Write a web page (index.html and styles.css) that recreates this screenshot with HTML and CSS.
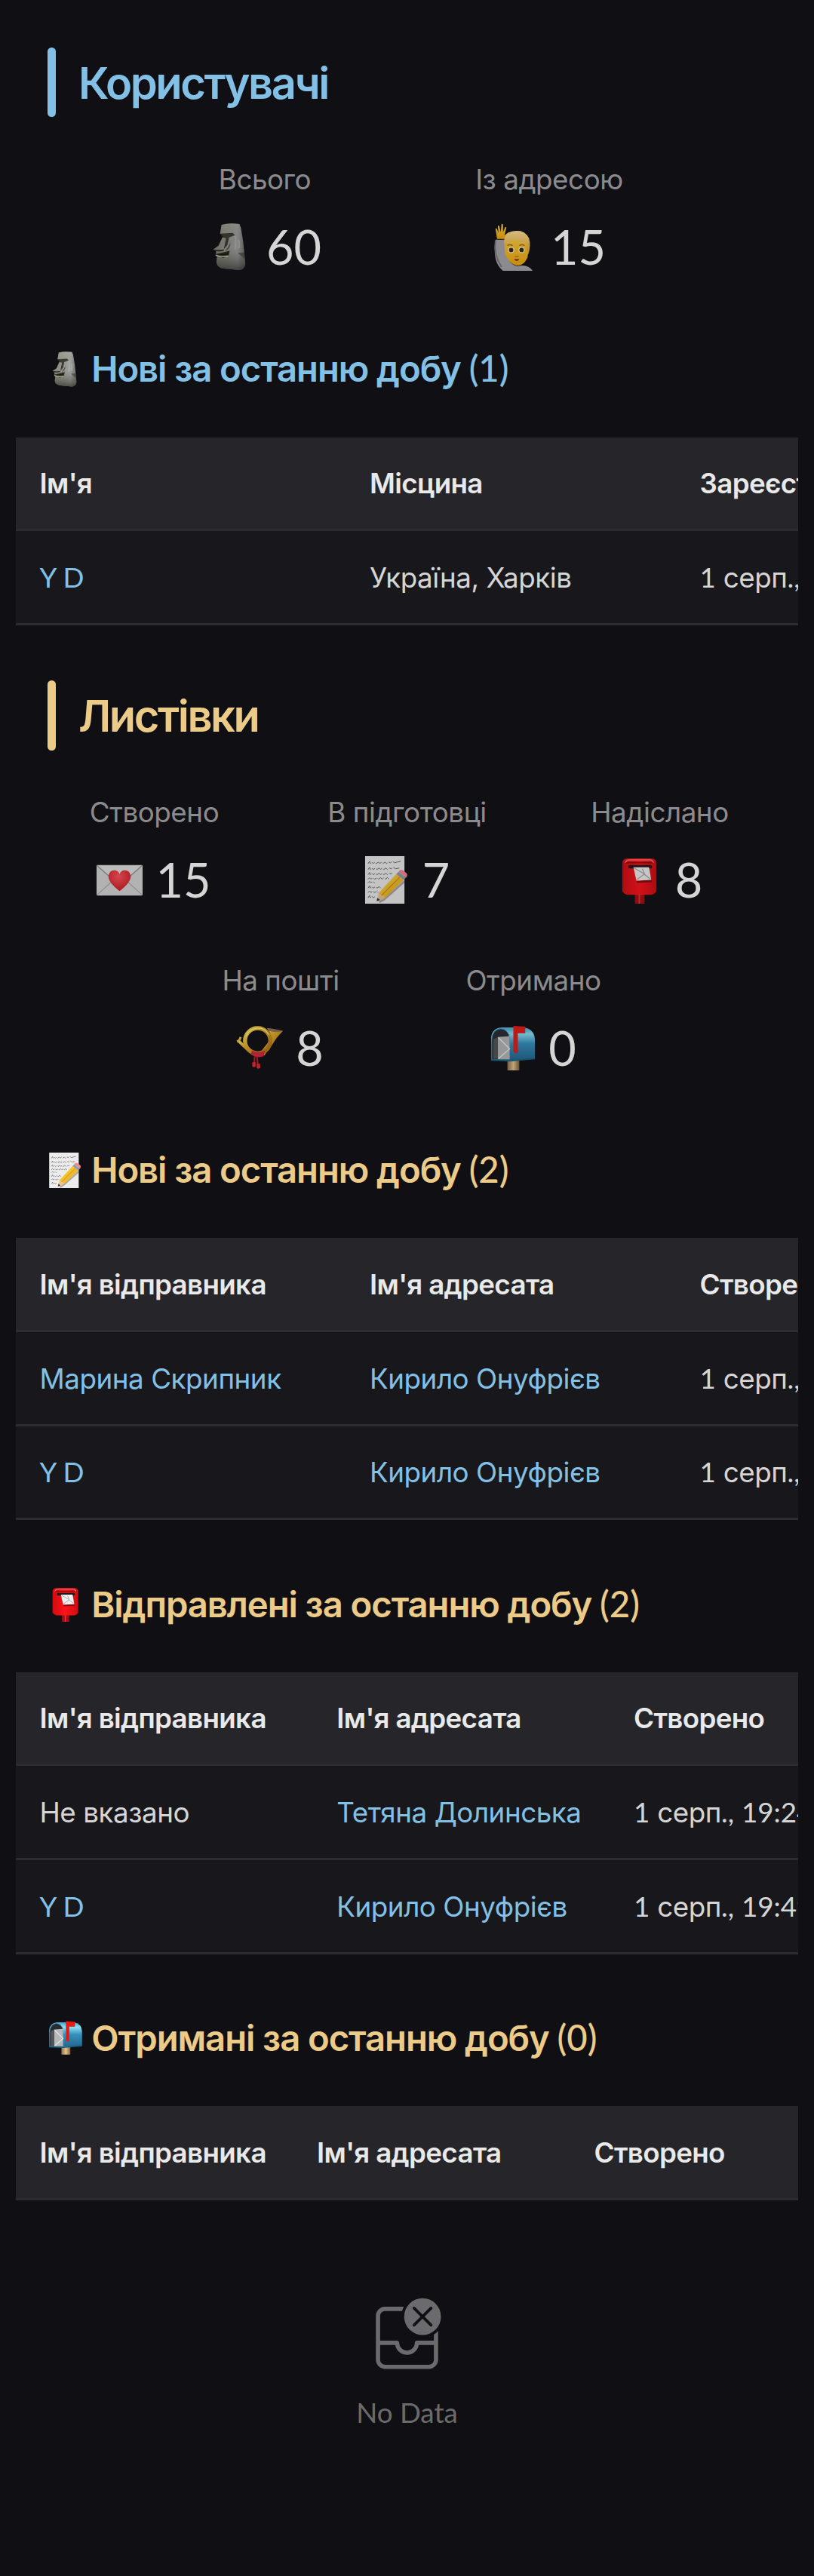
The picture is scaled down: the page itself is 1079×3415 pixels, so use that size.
FILE: index.html
```html
<!DOCTYPE html>
<html lang="uk">
<head>
<meta charset="utf-8">
<title>Статистика</title>
<link rel="stylesheet" href="styles.css">
</head>
<body>
<svg class="sprite" aria-hidden="true">
  <defs>
    <linearGradient id="stone" x1="0" x2="1" y1="0" y2="0"><stop offset="0" stop-color="#85857a"/><stop offset=".45" stop-color="#96968e"/><stop offset=".75" stop-color="#a0a2a4"/><stop offset="1" stop-color="#6e6e66"/></linearGradient>
    <linearGradient id="stone-shade" x1="0" x2="0" y1="0" y2="1"><stop offset="0" stop-color="#b0b098" stop-opacity=".4"/><stop offset=".5" stop-color="#777" stop-opacity="0"/><stop offset="1" stop-color="#2b2b20" stop-opacity=".7"/></linearGradient>
    <linearGradient id="skin" x1="0" x2="0" y1="0" y2="1"><stop offset="0" stop-color="#ffd84a"/><stop offset="1" stop-color="#f0a80c"/></linearGradient>
    <linearGradient id="hair" x1="0" x2="0" y1="0" y2="1"><stop offset="0" stop-color="#ffe09a"/><stop offset="1" stop-color="#e8a313"/></linearGradient>
    <linearGradient id="red" x1="0" x2="1" y1="0" y2="0"><stop offset="0" stop-color="#d20b12"/><stop offset=".5" stop-color="#fb1419"/><stop offset="1" stop-color="#d00b12"/></linearGradient>
    <linearGradient id="blue" x1="0" x2="0" y1="0" y2="1"><stop offset="0" stop-color="#49a4d0"/><stop offset=".2" stop-color="#8ce0f4"/><stop offset=".5" stop-color="#3590bd"/><stop offset="1" stop-color="#23688f"/></linearGradient>
    <linearGradient id="pencil" x1="0" x2="1" y1="0" y2="1"><stop offset="0" stop-color="#ffdc45"/><stop offset="1" stop-color="#e9a012"/></linearGradient>
    <linearGradient id="brass" x1="0" x2="1" y1="0" y2="1"><stop offset="0" stop-color="#ffe259"/><stop offset=".5" stop-color="#d89d20"/><stop offset="1" stop-color="#a96b12"/></linearGradient>
    <linearGradient id="wood" x1="0" x2="1" y1="0" y2="0"><stop offset="0" stop-color="#8e6f48"/><stop offset=".5" stop-color="#e6c48f"/><stop offset="1" stop-color="#80613c"/></linearGradient>
    <radialGradient id="heart" cx=".45" cy=".3" r=".8"><stop offset="0" stop-color="#ff5458"/><stop offset="1" stop-color="#c8141d"/></radialGradient>
  </defs>
  <symbol id="moai" viewBox="0 0 64 64">
    <path d="M20 2Q30-1 44 1L46 6 49 24 51 43 52 55Q51 62 44 63L23 61Q14 60 13 52L14 45 12 41 13 38 9 35 16 30 22 17 18 14Z" fill="url(#stone)"/>
    <path d="M20 2Q30-1 44 1L46 6 49 24 51 43 52 55Q51 62 44 63L23 61Q14 60 13 52L14 45 12 41 13 38 9 35 16 30 22 17 18 14Z" fill="url(#stone-shade)"/>
    <path d="M18 14 35 13 38 16 30 19 28 29 23 35 26 20 21 19Z" fill="#25251c" opacity=".8"/>
    <path d="M10 36Q17 38 23 36M13 42Q22 40 30 38L29 43 22 46Z" fill="#20201a" stroke="#2c2c22" stroke-width="1.500"/>
    <path d="M12 43Q20 46 29 44" stroke="#d0cda9" stroke-width="1.500" fill="none"/>
    <path d="M42 40 51 39 51 48ZM25 38Q33 34 32 26" fill="#33332b" opacity=".55"/>
    <path d="M38 17Q40 25 38 36M43 22Q45 28 43 34" stroke="#c0c2b4" stroke-width="2" opacity=".5" fill="none"/>
  </symbol>
  <symbol id="person" viewBox="0 0 64 64">
    <path d="M6 22H18Q20 40 25 51 29 56 35 58 49 54 56 64H16Q1 52 6 22Z" fill="#a5a5aa"/>
    <path d="M6 23Q3 42 14 59" stroke="#77777d" stroke-width="2" fill="none"/>
    <path d="M8 21 6 8Q6 5 8 8L10 13 9 4Q10 2 11 4L13 12 14 1Q16 0 16 3V12L19 5Q21 4 20 8L18 16 24 12Q26 13 18 21Z" fill="url(#skin)"/>
    <path d="M27 13Q36 8 45 13 53 19 51 33L49 46Q44 58 34 57 24 54 19 42 15 22 27 13Z" fill="url(#skin)"/>
    <path d="M18 31Q15 14 28 11 44 7 51 20 54 30 50 42 48 32 45 26 37 28 30 21 26 27 21 30Z" fill="url(#hair)"/>
    <circle cx="27" cy="36" r="4.200" fill="#fff1cb"/><circle cx="41" cy="36" r="4.200" fill="#fff1cb"/>
    <circle cx="27" cy="36" r="2.900" fill="#352516"/><circle cx="41" cy="36" r="2.900" fill="#352516"/>
    <path d="M22 30Q25 28 29 30M38 30Q42 28 45 30" stroke="#a96609" stroke-width="1.500" fill="none"/>
    <path d="M31 48H38Q37 51 34.500 51 32 51 31 48Z" fill="#8d3d0d"/><path d="M32 44Q35 46 37 44" stroke="#c77e04" stroke-width="1.600" fill="none"/>
  </symbol>
  <symbol id="letter" viewBox="0 0 64 64">
    <rect x="1" y="12" width="62" height="41" rx="1.500" fill="#d6d6d6"/>
    <path d="M2 52 25 31M62 52 39 31" stroke="#aaa" stroke-width="1.200"/>
    <path d="M2 13 29 37Q32 39 35 37L62 13" fill="#e2e2e2" stroke="#92979f" stroke-width="1.500"/>
    <path d="M32 47Q17 36 17 27 18 19 25 19 30 19 32 24 34 19 39 19 46 19 47 27 47 36 32 47Z" fill="url(#heart)"/>
  </symbol>
  <symbol id="memo" viewBox="0 0 64 64">
    <rect x="3" y="0" width="53" height="64" fill="#ececec"/>
    <g fill="none" stroke="#666" stroke-width="1" stroke-dasharray="8 2 5 2 11 2"><path d="M7 10l2-3 1 3 2-2 2 2 2-2 2 2 3-2 2 2 2-2 2 2 3-2 2 2 3-2 2 1 3-2 3 2 3-1 5-1"/><path d="M7 18l2-3 1 3 2-2 2 2 3-2 2 2 3-2 2 2 2-2 2 2 3-2 2 2 3-2 2 1 3-2 3 2 5-1"/><path d="M7 25l2-3 1 3 2-2 2 2 3-2 2 2 3-2 2 2 2-2 2 2 3-2 2 2 3-2 2 1 3-2"/><path d="M7 31l2-2 2 2 2-2 3 2 3-2 2 2 3-2 2 2 2-2 2 2 3-2 2 2"/><path d="M7 36l2-2 2 2 2-2 3 2"/><path d="M7 43l2-3 1 3 2-2 2 2 3-2 2 2 3-2 2 2"/><path d="M7 49l2-2 2 2 2-2 3 2 3-2 2 2"/><path d="M7 56l2-3 1 3 2-2 2 2 3-2"/></g>
    <path d="M22 62 29 58 56 34" stroke="#444" stroke-width="3" opacity=".4" fill="none"/>
    <path d="M21 50 45 24 55 32 30 56Z" fill="url(#pencil)"/>
    <path d="M25 53 50 28" stroke="#c98a0d" stroke-width="1.200"/>
    <path d="M21 50 30 56 20 61Z" fill="#edc38b"/><path d="M19.500 56 23 59 18.500 61Z" fill="#343434"/>
    <path d="M45 24 48 21 58 29 55 32Z" fill="#8d9ba7"/>
    <path d="M48 21Q50 17 54 19L59 23Q61 26 58 29Z" fill="#f28796"/>
  </symbol>
  <symbol id="postbox" viewBox="0 0 64 64">
    <path d="M26 49H39V64H26Z" fill="#a60d12"/><path d="M32 49V64" stroke="#e13235" stroke-width="2"/>
    <path d="M9 10Q9 3 16 3H48Q55 3 55 10V47Q52 52 48 52H16Q11 51 9 47Z" fill="url(#red)"/>
    <path d="M13 9Q15 5 18 5H46Q50 5 51 9" stroke="#ff7373" stroke-width="1.500" fill="none"/>
    <path d="M14 9H50" stroke="#88080c" stroke-width="1.500"/>
    <rect x="17" y="12" width="32" height="4.500" rx="2" fill="#22191b"/>
    <path d="M28 34 48 31 49 35 29 36Z" fill="#620508" opacity=".7"/>
    <path d="M24 15 45 15 48 32 28 33Z" fill="#f0f0f0"/><path d="M25 16 39 24 28 32M38 24 47 31M39 24 36 17" fill="none" stroke="#aaa" stroke-width="1.300"/>
  </symbol>
  <symbol id="horn" viewBox="0 0 64 64">
    <path d="M42 5Q52 9 63 9 54 18 49 27L38 42 33 37 44 23 46 12Z" fill="url(#brass)"/>
    <path d="M42 5Q54 6 63 9 54 12 45 9Z" fill="#8b7353"/>
    <path d="M3 22Q12 31 19 37L25 41" stroke="url(#brass)" stroke-width="4" fill="none"/>
    <path d="M1 23Q5 22 6 17" stroke="#e9bd44" stroke-width="3" fill="none"/>
    <circle cx="29" cy="22" r="17" fill="none" stroke="url(#brass)" stroke-width="5.500"/>
    <path d="M13 16Q19 5 30 5 39 5 44 14" stroke="#ffee7e" stroke-width="1.300" fill="none"/>
    <path d="M21 35Q30 40 39 35L37 43Q29 46 20 41Z" fill="#d7273c"/>
    <path d="M25 43 24 58M28 43 30 60" stroke="#c91c2a" stroke-width="2"/><path d="M24 51V57M30 53V59" stroke="#e72737" stroke-width="4.500"/>
  </symbol>
  <symbol id="mailbox" viewBox="0 0 64 64">
    <path d="M25 47H41V62H25Z" fill="url(#wood)"/>
    <path d="M3 48V19Q4 5 17 4H47Q61 6 62 20V46L29 48Z" fill="url(#blue)"/>
    <path d="M4 47V20Q5 7 16 6 27 7 28 20V47Z" fill="#282b30" stroke="#3e84a9" stroke-width="1"/>
    <path d="M12 17 28 16V47H12Z" fill="#b5b7b8"/><path d="M13 18 28 33 13 46" fill="none" stroke="#eee" stroke-width="1.400"/><path d="M6 20V46H12V17Z" fill="#555"/>
    <path d="M3 48 29 49 62 46" stroke="#176289" stroke-width="2" fill="none"/>
    <path d="M33 2 49 3V12H39V36Q39 39 36 39 33 38 33 35Z" fill="#e51b14"/>
  </symbol>
</svg>

<main class="page">
  <h2 class="title title--info">Користувачі</h2>
  <div class="stats stats--wide">
    <div class="stat"><div class="stat-label">Всього</div><div class="stat-value"><svg class="emoji"><use href="#moai"/></svg>60</div></div>
    <div class="stat"><div class="stat-label">Із адресою</div><div class="stat-value"><svg class="emoji"><use href="#person"/></svg>15</div></div>
  </div>

  <h3 class="subtitle subtitle--info"><svg class="emoji"><use href="#moai"/></svg><span>Нові за останню добу <b>(1)</b></span></h3>
  <div class="table table--w1">
    <div class="row row--head"><div>Ім'я</div><div>Місцина</div><div>Зареєстровано</div></div>
    <div class="row"><div><a><b>Y D</b></a></div><div>Україна, Харків</div><div><b>1</b> серп<b>.,</b> <b>19:20</b></div></div>
  </div>

  <h2 class="title title--warm">Листівки</h2>
  <div class="stats">
    <div class="stat"><div class="stat-label">Створено</div><div class="stat-value"><svg class="emoji"><use href="#letter"/></svg>15</div></div>
    <div class="stat"><div class="stat-label">В підготовці</div><div class="stat-value"><svg class="emoji"><use href="#memo"/></svg>7</div></div>
    <div class="stat"><div class="stat-label">Надіслано</div><div class="stat-value"><svg class="emoji"><use href="#postbox"/></svg>8</div></div>
    <div class="stat"><div class="stat-label">На пошті</div><div class="stat-value"><svg class="emoji"><use href="#horn"/></svg>8</div></div>
    <div class="stat"><div class="stat-label">Отримано</div><div class="stat-value"><svg class="emoji"><use href="#mailbox"/></svg>0</div></div>
  </div>

  <h3 class="subtitle subtitle--warm"><svg class="emoji"><use href="#memo"/></svg><span>Нові за останню добу <b>(2)</b></span></h3>
  <div class="table table--w1">
    <div class="row row--head"><div>Ім'я відправника</div><div>Ім'я адресата</div><div>Створено</div></div>
    <div class="row"><div><a>Марина Скрипник</a></div><div><a>Кирило Онуфрієв</a></div><div><b>1</b> серп<b>.,</b> <b>19:24</b></div></div>
    <div class="row"><div><a><b>Y D</b></a></div><div><a>Кирило Онуфрієв</a></div><div><b>1</b> серп<b>.,</b> <b>19:49</b></div></div>
  </div>

  <h3 class="subtitle subtitle--warm"><svg class="emoji"><use href="#postbox"/></svg><span>Відправлені за останню добу <b>(2)</b></span></h3>
  <div class="table table--w2">
    <div class="row row--head"><div>Ім'я відправника</div><div>Ім'я адресата</div><div>Створено</div></div>
    <div class="row"><div>Не вказано</div><div><a>Тетяна Долинська</a></div><div><b>1</b> серп<b>.,</b> <b>19:24</b></div></div>
    <div class="row"><div><a><b>Y D</b></a></div><div><a>Кирило Онуфрієв</a></div><div><b>1</b> серп<b>.,</b> <b>19:49</b></div></div>
  </div>

  <h3 class="subtitle subtitle--warm"><svg class="emoji"><use href="#mailbox"/></svg><span>Отримані за останню добу <b>(0)</b></span></h3>
  <div class="table table--w3">
    <div class="row row--head"><div>Ім'я відправника</div><div>Ім'я адресата</div><div>Створено</div></div>
  </div>
  <div class="empty">
    <svg class="empty-icon" viewBox="0 0 28 28" fill="currentColor">
      <circle cx="19.5" cy="7.5" r="6.500"/>
      <path class="empty-cross" d="M16.500 4.500l6 6m0-6l-6 6"/>
      <path d="M25 22.750V12.599C24.557 13.076 24.053 13.496 23.500 13.845V16H17.500L17.398 16.007C17.032 16.056 16.750 16.370 16.750 16.750C16.750 18.269 15.519 19.500 14 19.500C12.481 19.500 11.250 18.269 11.250 16.750L11.243 16.648C11.193 16.282 10.880 16 10.500 16H4.500V7.250C4.500 6.283 5.283 5.500 6.250 5.500H12.270C12.415 4.975 12.615 4.472 12.865 4H6.250C4.455 4 3 5.455 3 7.250V22.750C3 24.545 4.455 26 6.250 26H21.750C23.545 26 25 24.545 25 22.750ZM4.500 22.750V17.500H9.816L9.857 17.704C10.290 19.592 11.981 21 14 21L14.215 20.995C16.209 20.895 17.842 19.421 18.184 17.500H23.500V22.750C23.500 23.716 22.716 24.500 21.750 24.500H6.250C5.283 24.500 4.500 23.716 4.500 22.750Z"/>
    </svg>
    <div class="empty-text">No Data</div>
  </div>
</main>
</body>
</html>
```
FILE: styles.css
```css
* { box-sizing: border-box; }

body {
  margin: 0;
  background: #101014;
  color: #d5d5d6;
  font-family: Inter, sans-serif;
  font-size: 36.75px;
  line-height: 1.6;
  letter-spacing: -.012em;
}

/* Latin letters, digits and punctuation */
b, .stat-value, .empty-text {
  font-family: Lato, sans-serif;
  font-weight: 400;
  letter-spacing: 0;
}
b { line-height: 1; }

.sprite { display: block; width: 0; height: 0; }

.page { min-height: 3415px; padding: 63px 21px 0; overflow: hidden; }

.title, .subtitle { font-weight: 600; margin: 73.5px 42px 52.5px; }

.title {
  display: flex;
  gap: 30.5px;
  height: 92.4px;
  font-size: 57.75px;
  line-height: 94.4px;
  letter-spacing: -.042em;
}
.title::before {
  content: "";
  width: 10.5px;
  border-radius: 5.25px;
  background: currentColor;
}
.title:first-child { margin-top: 0; }
.title--info, .subtitle--info { color: #83c0e6; }
.title--warm, .subtitle--warm { color: #eccb88; }

.subtitle {
  display: flex;
  align-items: center;
  gap: 11px;
  font-size: 47.25px;
  line-height: 75.6px;
  letter-spacing: -.023em;
  white-space: nowrap;
}
.subtitle b { font-weight: 500; }

.emoji { flex: none; width: 1em; height: 1em; }

.stats {
  display: flex;
  flex-wrap: wrap;
  justify-content: center;
  row-gap: 52.5px;
}
.stat { width: 335px; text-align: center; }
.stats--wide .stat { width: 377px; }
.stat-label { height: 58.8px; color: #8b8b8d; line-height: 60px; }
.stat-value {
  display: flex;
  justify-content: center;
  align-items: center;
  gap: 16px;
  margin-top: 10.5px;
  padding-right: 2px;
  font-size: 63px;
  line-height: 100.8px;
}
.stat-value .emoji { opacity: .82; }

.table { overflow: hidden; --col: 437.5px; }
.table--w2 { --col: 393.75px; }
.table--w3 { --col: 367.5px; }
.row {
  display: grid;
  grid-template-columns: repeat(3, var(--col));
  height: 124.6px;
  padding-top: 31.5px;
  border-bottom: 3px solid #2d2d30;
  background: #18181c;
  line-height: 60.6px;
  white-space: nowrap;
}
.row > div { padding-left: 31.5px; }
.row--head { background: #26262a; color: #e9e9ea; font-weight: 600; letter-spacing: -.018em; }
.row a { color: #83c0e6; }

.empty {
  display: flex;
  flex-direction: column;
  align-items: center;
  gap: 21px;
  padding-top: 126px;
  color: #6b6b6d;
}
.empty-icon { width: 105px; height: 105px; }
.empty-cross { stroke: #101014; stroke-linecap: round; }
```
